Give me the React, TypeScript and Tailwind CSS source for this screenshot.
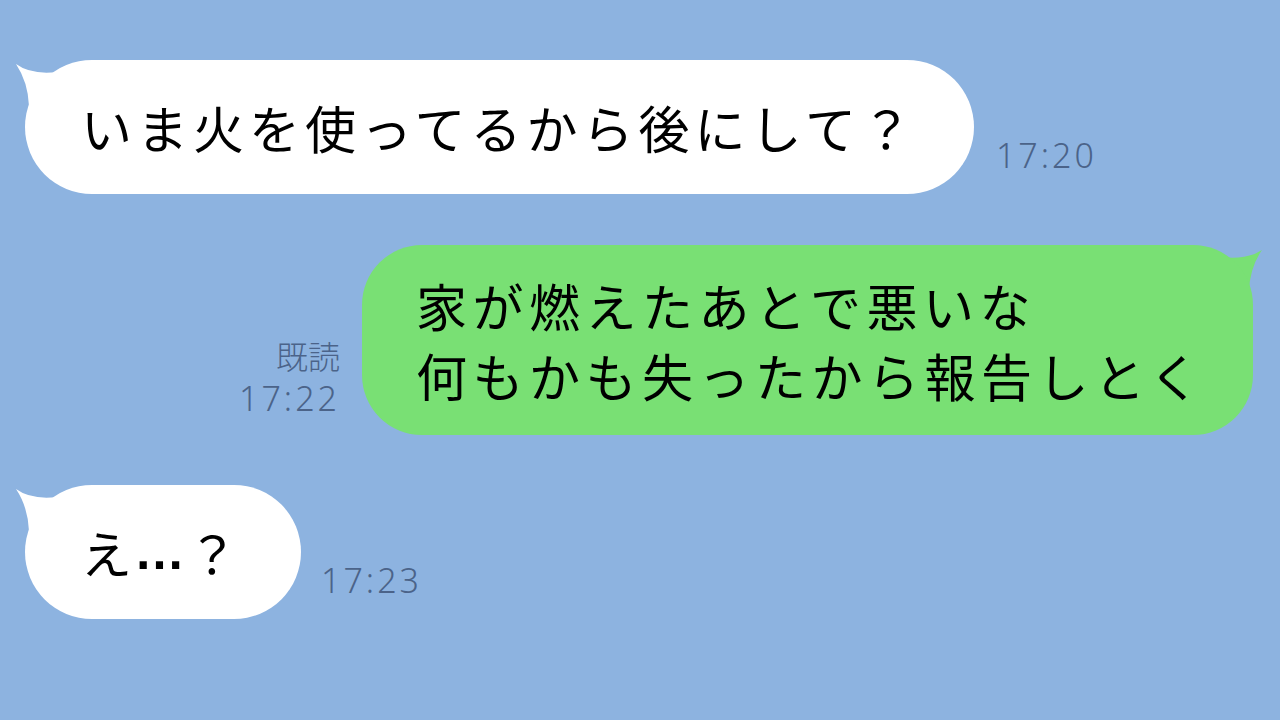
const jp = "font-['Noto_Sans_CJK_JP',sans-serif]";

function TailLeft() {
  return (
    <svg width="50" height="50" viewBox="0 0 50 50" className="absolute -left-[10px] top-0">
      <path d="M1 4 Q16 15 42 12 L42 46 L14 46 Q13 22 1 4 Z" fill="#ffffff" />
    </svg>
  );
}

function TailRight() {
  return (
    <svg width="50" height="50" viewBox="0 0 50 50" className="absolute -right-[10px] top-0">
      <path d="M49 5 Q34 15 8 12 L8 46 L36 46 Q37 22 49 5 Z" fill="#79e074" />
    </svg>
  );
}

function Time({ children }: { children: string }) {
  return (
    <div className="font-['Noto_Sans','Liberation_Sans',sans-serif] font-light text-[34px] leading-none tracking-[3px] text-[#4b6389]">
      {children}
    </div>
  );
}

export default function App() {
  return (
    <div className={`w-[1280px] h-[720px] bg-[#8db3e0] overflow-hidden ${jp}`}>
      <div className="pt-[60px] pl-[25px] flex items-end gap-[22px]">
        <div className="relative">
          <TailLeft />
          <div className="relative h-[134px] bg-white rounded-[67px] pl-[56px] pr-[57px] flex items-center text-[51px] tracking-[5px] text-black">
            いま火を使ってるから後にして？
          </div>
        </div>
        <div className="pb-[22px]">
          <Time>17:20</Time>
        </div>
      </div>

      <div className="mt-[51px] flex justify-end items-end gap-[22px] pr-[27px]">
        <div className="pb-[20px] flex flex-col items-end gap-[10px] text-[#4b6389]">
          <div className="text-[32px] font-light leading-none">既読</div>
          <Time>17:22</Time>
        </div>
        <div className="relative">
          <TailRight />
          <div className="relative h-[190px] w-[891px] bg-[#79e074] rounded-[60px] pl-[54px] flex flex-col justify-center text-[51px] leading-[70px] tracking-[5.5px] text-black">
            <div>家が燃えたあとで悪いな</div>
            <div>何もかも失ったから報告しとく</div>
          </div>
        </div>
      </div>

      <div className="mt-[50px] pl-[25px] flex items-end gap-[20px]">
        <div className="relative">
          <TailLeft />
          <div className="relative h-[134px] bg-white rounded-[67px] pl-[56px] pr-[63px] flex items-center text-[51px] text-black">
            <span className="tracking-[2px]">え</span>
            <span className="font-['Liberation_Sans',sans-serif] font-bold tracking-[2px]">…</span>
            <span>？</span>
          </div>
        </div>
        <div className="pb-[22px]">
          <Time>17:23</Time>
        </div>
      </div>
    </div>
  );
}
